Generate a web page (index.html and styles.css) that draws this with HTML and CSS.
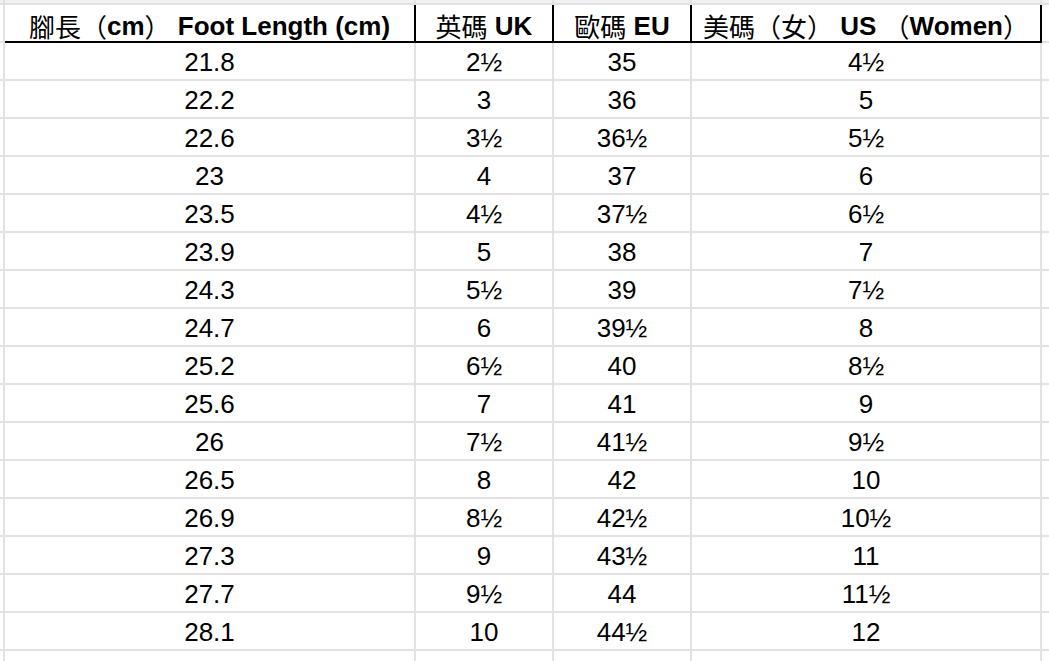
FILE: index.html
```html
<!DOCTYPE html>
<html lang="zh-Hant">
<head>
<meta charset="utf-8">
<title>Size chart</title>
<link rel="stylesheet" href="styles.css">
</head>
<body>
<div class="sheet">
  <div class="row top"><div class="c edge"></div><div class="c"></div><div class="c"></div><div class="c"></div><div class="c"></div><div class="c tail"></div></div>
  <div class="row head">
    <div class="c edge"></div>
    <div class="c h"><span class="cjk">腳長（</span>cm<span class="cjk">）</span>&nbsp;Foot Length (cm)</div>
    <div class="c h"><span class="cjk">英碼</span>&nbsp;UK</div>
    <div class="c h"><span class="cjk">歐碼</span>&nbsp;EU</div>
    <div class="c h"><span class="cjk">美碼（女）</span>&nbsp;US&nbsp;<span class="cjk">（</span>Women<span class="cjk">）</span></div>
    <div class="c tail"></div>
  </div>
  <div class="row"><div class="c edge"></div><div class="c">21.8</div><div class="c">2½</div><div class="c">35</div><div class="c">4½</div><div class="c tail"></div></div>
  <div class="row"><div class="c edge"></div><div class="c">22.2</div><div class="c">3</div><div class="c">36</div><div class="c">5</div><div class="c tail"></div></div>
  <div class="row"><div class="c edge"></div><div class="c">22.6</div><div class="c">3½</div><div class="c">36½</div><div class="c">5½</div><div class="c tail"></div></div>
  <div class="row"><div class="c edge"></div><div class="c">23</div><div class="c">4</div><div class="c">37</div><div class="c">6</div><div class="c tail"></div></div>
  <div class="row"><div class="c edge"></div><div class="c">23.5</div><div class="c">4½</div><div class="c">37½</div><div class="c">6½</div><div class="c tail"></div></div>
  <div class="row"><div class="c edge"></div><div class="c">23.9</div><div class="c">5</div><div class="c">38</div><div class="c">7</div><div class="c tail"></div></div>
  <div class="row"><div class="c edge"></div><div class="c">24.3</div><div class="c">5½</div><div class="c">39</div><div class="c">7½</div><div class="c tail"></div></div>
  <div class="row"><div class="c edge"></div><div class="c">24.7</div><div class="c">6</div><div class="c">39½</div><div class="c">8</div><div class="c tail"></div></div>
  <div class="row"><div class="c edge"></div><div class="c">25.2</div><div class="c">6½</div><div class="c">40</div><div class="c">8½</div><div class="c tail"></div></div>
  <div class="row"><div class="c edge"></div><div class="c">25.6</div><div class="c">7</div><div class="c">41</div><div class="c">9</div><div class="c tail"></div></div>
  <div class="row"><div class="c edge"></div><div class="c">26</div><div class="c">7½</div><div class="c">41½</div><div class="c">9½</div><div class="c tail"></div></div>
  <div class="row"><div class="c edge"></div><div class="c">26.5</div><div class="c">8</div><div class="c">42</div><div class="c">10</div><div class="c tail"></div></div>
  <div class="row"><div class="c edge"></div><div class="c">26.9</div><div class="c">8½</div><div class="c">42½</div><div class="c">10½</div><div class="c tail"></div></div>
  <div class="row"><div class="c edge"></div><div class="c">27.3</div><div class="c">9</div><div class="c">43½</div><div class="c">11</div><div class="c tail"></div></div>
  <div class="row"><div class="c edge"></div><div class="c">27.7</div><div class="c">9½</div><div class="c">44</div><div class="c">11½</div><div class="c tail"></div></div>
  <div class="row"><div class="c edge"></div><div class="c">28.1</div><div class="c">10</div><div class="c">44½</div><div class="c">12</div><div class="c tail"></div></div>
  <div class="row"><div class="c edge"></div><div class="c"></div><div class="c"></div><div class="c"></div><div class="c"></div><div class="c tail"></div></div>
</div>
</body>
</html>
```

FILE: styles.css
```css
html, body {
  margin: 0;
  padding: 0;
  background: #ffffff;
  overflow: hidden;
}

.sheet {
  width: 1049px;
  font-family: "Liberation Sans", Arial, "Noto Sans CJK TC", sans-serif;
  font-size: 26px;
  color: #000000;
}

.row {
  display: grid;
  grid-template-columns: 5px 411px 138px 138px 350px 1fr;
  height: 38px;
}

.c {
  box-sizing: border-box;
  border-right: 2px solid #e2e2e2;
  border-bottom: 2px solid #e2e2e2;
  display: flex;
  align-items: center;
  justify-content: center;
  white-space: nowrap;
  line-height: 1;
  padding-top: 1px;
}

.c.tail {
  border-right: none;
}

.row.top {
  height: 5px;
}

.row.top .c {
  background: #f1f1f1;
  padding: 0;
}

.row.head .c {
  border-bottom-color: #000000;
  padding-top: 5px;
}

.row.head .c.h {
  border-right-color: #000000;
  font-weight: bold;
}

.row.head .c.edge,
.row.head .c.tail {
  border-bottom-color: #e2e2e2;
}

.cjk {
  font-family: "Noto Sans CJK TC", "Noto Sans CJK SC", sans-serif;
  font-weight: normal;
}
```
